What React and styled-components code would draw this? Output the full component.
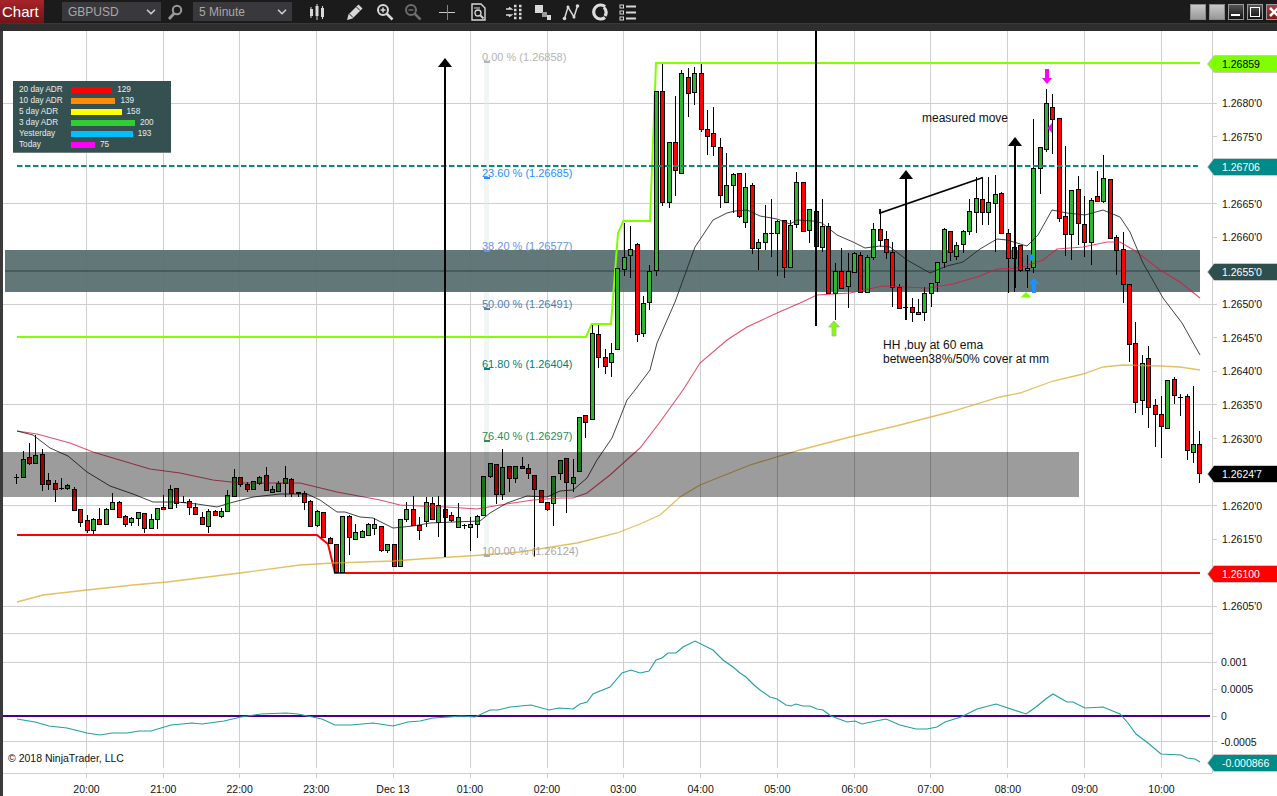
import React from 'react';
import styled, { createGlobalStyle } from 'styled-components';
import { ChevronDown } from 'lucide-react';

// [high, low, bodyTop, bodyBottom, colour] in page pixels, one candle every 6.4px
const CANDLES = [
  [474,484,477,477,'d'],[451,478,459,477,'g'],[443,465,457,463,'r'],[435,463,455,463,'g'],[449,491,454,484,'r'],[473,490,480,484,'r'],
  [480,502,483,489,'r'],[478,490,488,488,'d'],[484,490,485,488,'g'],[487,511,489,510,'r'],[509,527,509,522,'r'],[515,533,520,530,'r'],
  [518,534,519,530,'g'],[508,525,519,524,'r'],[508,525,509,524,'g'],[493,509,502,509,'g'],[501,518,502,517,'r'],[515,527,516,524,'r'],
  [517,526,518,522,'g'],[512,526,512,518,'g'],[513,533,513,528,'r'],[514,529,519,528,'g'],[508,529,508,519,'g'],[495,509,507,509,'r'],
  [485,508,489,508,'g'],[488,508,488,503,'r'],[496,503,502,502,'d'],[499,515,501,507,'r'],[503,515,507,514,'r'],[512,525,517,524,'r'],
  [509,533,511,526,'g'],[510,515,511,515,'r'],[508,518,511,516,'g'],[490,512,495,511,'g'],[469,497,477,496,'g'],[477,487,477,484,'r'],
  [482,492,484,489,'r'],[481,490,481,489,'g'],[476,485,477,483,'g'],[467,491,475,490,'r'],[486,492,489,492,'g'],[481,492,483,491,'g'],
  [466,497,478,483,'g'],[478,497,479,493,'r'],[492,497,492,493,'r'],[491,510,493,502,'r'],[500,526,501,526,'r'],[510,527,511,525,'g'],
  [512,537,512,537,'r'],[537,544,538,543,'r'],[544,572,544,572,'r'],[516,572,516,572,'g'],[515,555,516,537,'r'],[524,539,532,539,'g'],
  [530,537,531,537,'g'],[523,535,524,535,'g'],[518,535,524,528,'g'],[526,552,526,550,'r'],[544,553,544,550,'g'],[544,567,544,566,'r'],
  [519,566,519,566,'g'],[502,522,509,519,'g'],[496,526,509,525,'r'],[517,540,525,530,'r'],[497,527,502,521,'g'],[497,520,503,519,'r'],
  [496,537,505,522,'g'],[503,527,509,517,'r'],[512,522,515,520,'r'],[503,527,517,527,'g'],[524,529,525,525,'d'],[517,551,524,527,'g'],
  [515,538,516,524,'g'],[476,516,476,515,'g'],[463,478,463,476,'g'],[464,504,464,494,'r'],[449,500,467,494,'g'],[466,492,466,478,'r'],
  [466,483,466,478,'g'],[457,468,466,468,'r'],[464,479,468,473,'r'],[475,557,475,489,'r'],[490,503,490,502,'r'],[502,511,502,509,'r'],
  [476,526,476,503,'g'],[460,480,460,473,'g'],[458,513,458,482,'r'],[459,492,477,483,'g'],[417,471,417,471,'g'],[415,438,415,422,'r'],
  [325,419,333,419,'g'],[325,368,334,357,'r'],[349,374,357,366,'r'],[343,377,353,362,'g'],[268,349,268,349,'g'],[223,276,257,269,'g'],
  [226,278,249,255,'g'],[243,342,244,334,'r'],[296,337,303,333,'g'],[265,310,271,302,'g'],[91,276,91,270,'g'],[64,206,91,202,'r'],
  [142,208,142,202,'g'],[96,196,142,170,'r'],[70,173,73,173,'g'],[68,117,77,93,'r'],[67,105,73,92,'g'],[64,132,73,129,'r'],
  [110,155,129,136,'r'],[107,156,133,146,'r'],[138,208,147,195,'r'],[153,202,185,202,'g'],[173,213,174,185,'g'],[173,218,173,216,'r'],
  [173,228,187,222,'g'],[183,254,185,248,'r'],[239,270,242,248,'g'],[205,250,233,242,'g'],[199,257,233,233,'d'],[220,276,221,233,'g'],
  [220,278,220,267,'r'],[220,267,225,267,'g'],[172,228,182,224,'g'],[182,232,182,231,'r'],[209,243,209,230,'g'],[211,247,211,246,'r'],
  [199,252,226,247,'g'],[223,293,226,293,'r'],[263,320,271,293,'g'],[248,288,271,288,'r'],[253,308,271,286,'g'],[252,272,253,272,'g'],
  [252,293,255,292,'r'],[255,292,257,292,'g'],[223,260,229,257,'g'],[210,247,229,240,'r'],[231,259,239,252,'r'],[242,307,252,287,'r'],
  [284,308,287,308,'r'],[293,320,307,307,'d'],[298,322,307,312,'r'],[299,314,312,314,'g'],[287,321,293,312,'g'],[283,307,283,293,'g'],
  [262,292,262,282,'g'],[228,268,229,262,'g'],[231,261,231,252,'r'],[242,260,245,256,'g'],[230,253,231,244,'g'],[199,235,211,231,'g'],
  [177,233,198,212,'g'],[177,225,199,212,'r'],[177,225,202,212,'g'],[175,252,194,203,'g'],[192,234,193,233,'r'],[229,293,233,258,'r'],
  [245,292,247,258,'g'],[245,272,245,270,'r'],[255,288,268,270,'g'],[119,273,168,267,'g'],[147,194,147,168,'g'],[89,152,103,149,'g'],
  [94,154,107,119,'r'],[118,222,118,218,'r'],[146,256,216,234,'r'],[190,260,190,234,'g'],[176,245,189,223,'r'],[196,257,224,242,'r'],
  [198,265,200,242,'g'],[171,202,196,201,'r'],[155,203,178,201,'g'],[179,238,179,238,'r'],[235,275,237,250,'r'],[232,303,249,284,'r'],
  [284,362,284,344,'r'],[322,413,343,402,'r'],[355,415,363,400,'g'],[346,428,358,407,'r'],[399,447,405,414,'r'],[396,458,414,426,'r'],
  [380,428,380,428,'g'],[377,404,379,395,'r'],[394,416,397,397,'d'],[394,460,396,450,'r'],[386,463,444,452,'g'],[431,483,444,473,'r'],
];

const BLACK_EMA = '17,431 33,435 50,448 68,456 87,472 110,486 133,494 153,502 177,502 197,504 217,507 230,503 253,497 280,494 307,494 320,500 337,512 345,512 360,517 373,518 393,528 413,526 430,523 453,522 480,521 490,513 507,503 527,496 547,497 560,491 573,490 587,478 597,460 612,438 627,400 635,390 650,370 657,343 675,302 695,247 713,220 727,213 735,211 747,210 760,216 777,219 790,224 797,220 813,221 822,223 837,235 853,242 865,248 880,246 890,247 907,260 930,273 947,266 963,262 980,249 997,239 1007,240 1027,246 1038,235 1052,210 1067,213 1085,215 1103,210 1120,217 1130,232 1143,263 1163,298 1182,323 1200,355';
const RED_EMA = '17,431 37,434 70,443 93,452 123,461 150,469 180,473 213,480 240,483 300,483 337,492 380,500 400,505 420,506 447,507 477,509 500,505 533,500 560,498 573,498 587,493 610,475 640,448 660,422 683,390 700,363 727,340 747,327 777,313 800,303 817,295 850,293 883,286 927,288 953,284 980,276 997,269 1020,268 1043,260 1057,249 1083,247 1107,242 1120,242 1137,252 1160,270 1180,282 1200,298';
const GOLD_EMA = '17,602 43,595 87,590 133,585 167,582 240,573 300,565 333,563 393,561 420,559 483,555 520,552 577,543 617,533 640,524 660,515 680,497 700,485 750,465 800,450 850,437 900,425 950,412 1000,397 1020,393 1053,381 1083,374 1103,367 1123,365 1160,366 1180,367 1200,370';
const OSCILLATOR = '17,719 35,722 49,726 67,728 87,733 100,735 112,733 127,733 139,731 151,731 171,725 192,723 202,724 224,721 241,717 261,714 286,713 298,714 322,719 335,725 351,725 373,723 393,726 408,722 420,721 433,718 449,717 461,716 475,717 490,710 498,710 510,707 531,705 549,710 559,708 573,709 580,704 587,702 593,694 600,691 610,687 622,673 631,670 640,673 649,671 656,660 662,658 668,653 676,653 683,647 695,641 713,650 723,660 733,667 740,673 746,677 754,685 760,690 770,697 777,699 786,705 791,706 796,704 803,706 810,706 817,709 823,710 831,716 847,722 855,721 862,724 876,721 886,719 900,725 916,729 927,729 937,727 945,722 961,717 977,709 996,704 1026,714 1036,707 1047,698 1053,694 1067,702 1073,702 1085,708 1103,707 1120,714 1128,723 1136,734 1148,743 1161,754 1181,755 1187,758 1195,759 1200,762';

const HOURS = [
  ['20:00', 86.5], ['21:00', 163.3], ['22:00', 239.6], ['23:00', 316.3], ['Dec 13', 393], ['01:00', 470], ['02:00', 547], ['03:00', 623.3],
  ['04:00', 700.6], ['05:00', 777.4], ['06:00', 854.6], ['07:00', 930.7], ['08:00', 1007.9], ['09:00', 1084.7], ['10:00', 1161.5],
];

const priceY = (p) => 103 + ((1.268 - p) / 0.0005) * 33.55;
const PRICE_TICKS = ['1.2685', '1.2680', '1.2675', '1.2670', '1.2665', '1.2660', '1.2655', '1.2650', '1.2645', '1.2640', '1.2635', '1.2630', '1.2625', '1.2620', '1.2615', '1.2610', '1.2605'];
// these sit fully behind a price tag in the picture
const HIDDEN_LABELS = ['1.2670', '1.2655', '1.2625', '1.2610'];
const PRICE_GRID = [1.268, 1.2665, 1.265, 1.2635, 1.262, 1.2605];

const FIBS = [
  ['0.00 % (1.26858)', 62, '#b4b4b4'],
  ['23.60 % (1.26685)', 178, '#1e90ff'],
  ['38.20 % (1.26577)', 251, '#6495ed'],
  ['50.00 % (1.26491)', 309, '#4682b4'],
  ['61.80 % (1.26404)', 369, '#008080'],
  ['76.40 % (1.26297)', 441, '#2e8b57'],
  ['100.00 % (1.26124)', 556, '#a9a9a9'],
];

const ADR = [
  ['20 day ADR', 129, '#ff0000'],
  ['10 day ADR', 139, '#ff8c00'],
  ['5 day ADR', 158, '#ffff00'],
  ['3 day ADR', 200, '#32cd32'],
  ['Yesterday', 193, '#00bfff'],
  ['Today', 75, '#ff00ff'],
];

const TAGS = [
  ['1.26859', 63, '#7fff00', '#000'],
  ['1.26706', 166, '#008b8b', '#fff'],
  ["1.2655'0", 271, '#2f4f4f', '#fff'],
  ["1.2624'7", 473, '#000', '#fff'],
  ['1.26100', 573, '#f00', '#fff'],
  ['-0.000866', 762, '#008b8b', '#fff'],
];

const GlobalStyle = createGlobalStyle`
  html, body {
    margin: 0;
    height: 100%;
    overflow: hidden;
    background: #fff;
    font-family: "Liberation Sans", Arial, sans-serif;
  }
`;

const Window = styled.div`
  display: flex;
  flex-direction: column;
  height: 796px;
  overflow: hidden;
`;

const TitleBar = styled.div`
  display: flex;
  align-items: center;
  height: 23px;
  flex: none;
  background: #1b1b1b;
`;

const ChartTab = styled.div`
  width: 44px;
  height: 100%;
  margin-right: 18px;
  padding-left: 2px;
  box-sizing: border-box;
  background: linear-gradient(#a8232a, #731418);
  color: #fff;
  font-size: 15px;
  line-height: 23px;
`;

const Select = styled.div`
  display: flex;
  align-items: center;
  justify-content: space-between;
  width: 99px;
  height: 19px;
  margin-left: ${(p) => p.$ml || 0}px;
  padding: 0 3px 0 6px;
  box-sizing: border-box;
  background: #39393d;
  color: #a8a8a8;
  font-size: 12px;
`;

const IconSlot = styled.div`
  display: flex;
  align-items: center;
  justify-content: center;
  flex: none;
  width: 20px;
  height: 20px;
  margin-left: ${(p) => p.$ml}px;
`;

const WindowButtons = styled.div`
  display: flex;
  gap: 3px;
  margin-left: auto;
  margin-right: -5px;
`;

const WindowButton = styled.div`
  display: flex;
  align-items: center;
  justify-content: center;
  width: 16px;
  height: 16px;
  flex: none;
  box-sizing: border-box;
  background: ${(p) =>
    p.$kind === 'blank' ? 'linear-gradient(#c8c8c8, #989898)'
    : p.$kind === 'close' ? 'linear-gradient(#b04040, #7d1a1a)'
    : 'linear-gradient(#555, #111)'};
  border: 1px solid ${(p) => (p.$kind === 'blank' ? '#8a8a8a' : '#9a9a9a')};
`;

const Strip = styled.div`
  height: 8px;
  flex: none;
  background: #2e2e2e;
  border-top: 1px solid #383838;
  box-sizing: border-box;
`;

const ChartArea = styled.div`
  position: relative;
  flex: 1;
  border-left: 3px solid #3a3a3a;
  background: #fff;
`;

const ChartSvg = styled.svg`
  display: block;
  width: 1274px;
  height: 765px;
  font-family: "Liberation Sans", Arial, sans-serif;
`;

const Legend = styled.div`
  position: absolute;
  left: 10px;
  top: 50px;
  width: 158px;
  height: 72px;
  padding: 3px 0 0 6px;
  box-sizing: border-box;
  background: #355050;
  border-bottom: 1px solid #6c8080;
`;

const LegendRow = styled.div`
  display: flex;
  align-items: center;
  height: 11px;
  color: #e6ecec;
  font-size: 8.2px;
`;

const LegendLabel = styled.span`
  width: 52px;
  flex: none;
`;

const LegendBar = styled.span`
  height: 6px;
  flex: none;
  margin-right: 5px;
  background: ${(p) => p.$color};
`;

const PriceTag = styled.div`
  position: absolute;
  left: 1204px;
  top: ${(p) => p.$y - 39}px;
  width: 70px;
  height: 18px;
  background: #c8c8c8;
  clip-path: polygon(7px 0, 100% 0, 100% 100%, 7px 100%, 0 50%);
`;

const PriceTagBody = styled.div`
  height: 16px;
  margin: 1px 0 1px 1px;
  padding-left: 14px;
  background: ${(p) => p.$bg};
  color: ${(p) => p.$fg};
  font-size: 10.5px;
  line-height: 16px;
  clip-path: polygon(6px 0, 100% 0, 100% 100%, 6px 100%, 0 50%);
`;

const ICON_STROKE = '#d8d8d8';

function BarsIcon() {
  return (
    <svg width="18" height="18" viewBox="0 0 18 18">
      <path d="M3 4v11M9 1v16M14.500 3v13" stroke={ICON_STROKE} strokeWidth="1" />
      <rect x="2" y="6" width="3" height="7" fill={ICON_STROKE} />
      <rect x="7.500" y="3" width="3" height="10" fill={ICON_STROKE} />
      <rect x="13" y="5" width="3" height="9" fill={ICON_STROKE} />
    </svg>
  );
}

function PencilIcon() {
  return (
    <svg width="18" height="18" viewBox="0 0 18 18">
      <path d="M1 17l1.500-5.500L12.500 1.500l4 4-10 10z" fill={ICON_STROKE} />
      <path d="M3.500 11l3.500 3.500M10.500 4l3.500 3.500" stroke="#1b1b1b" strokeWidth="1" />
    </svg>
  );
}

function MagnifierIcon({ color = ICON_STROKE, mark = 'plus' }) {
  return (
    <svg width="18" height="18" viewBox="0 0 18 18">
      <circle cx="7" cy="7" r="5" fill="none" stroke={color} strokeWidth="2" />
      <path d="M10.500 10.500l6 6" stroke={color} strokeWidth="2.500" />
      <path d={mark === 'plus' ? 'M4.500 7h5M7 4.500v5' : 'M4.500 7h5'} stroke={color} strokeWidth="1.500" />
    </svg>
  );
}

function SymbolSearchIcon() {
  return (
    <svg width="16" height="16" viewBox="0 0 16 16">
      <circle cx="10" cy="6" r="4.200" fill="none" stroke="#9a9a9a" strokeWidth="2" />
      <path d="M7 9.500L2 15" stroke="#9a9a9a" strokeWidth="2.800" />
    </svg>
  );
}

function CrossIcon() {
  return (
    <svg width="18" height="18" viewBox="0 0 18 18">
      <path d="M1 9.500h16" stroke="#c8c8c8" strokeWidth="1" />
      <path d="M9.500 2v15" stroke="#b87a3a" strokeWidth="1" />
    </svg>
  );
}

function DocSearchIcon() {
  return (
    <svg width="18" height="18" viewBox="0 0 18 18">
      <path d="M2 1h9l4 4v12H2z" fill="none" stroke={ICON_STROKE} strokeWidth="1.400" />
      <path d="M4 5h6" stroke={ICON_STROKE} strokeWidth="1" />
      <circle cx="8" cy="10" r="3" fill="none" stroke={ICON_STROKE} strokeWidth="1.300" />
      <path d="M10.500 12.500l3 3" stroke={ICON_STROKE} strokeWidth="1.800" />
    </svg>
  );
}

function ColumnsIcon() {
  return (
    <svg width="18" height="18" viewBox="0 0 18 18">
      <path d="M1 6h5l-2 -1.500M1 12h5l-2 1.500" fill="none" stroke={ICON_STROKE} strokeWidth="1.600" />
      <path d="M9 3h2.500M9 7h2.500M9 11h2.500M9 15h2.500M14 3h2.500M14 7h2.500M14 11h2.500M14 15h2.500" stroke={ICON_STROKE} strokeWidth="2.500" />
    </svg>
  );
}

function SquaresIcon() {
  return (
    <svg width="18" height="18" viewBox="0 0 18 18">
      <rect x="1" y="2" width="8" height="8" fill="#d8d8d8" />
      <rect x="8" y="9" width="5" height="5" fill="#9a9a9a" />
      <rect x="13" y="12" width="4" height="5" fill="#d8d8d8" />
    </svg>
  );
}

function NodesIcon() {
  return (
    <svg width="18" height="18" viewBox="0 0 18 18">
      <path d="M2.500 15.500L6 4l6 10L15.500 3" fill="none" stroke={ICON_STROKE} strokeWidth="1.500" />
      <circle cx="2.500" cy="15.500" r="1.800" fill={ICON_STROKE} />
      <circle cx="6" cy="4" r="1.500" fill={ICON_STROKE} />
      <circle cx="12" cy="14" r="1.500" fill={ICON_STROKE} />
      <circle cx="15.500" cy="3" r="1.800" fill={ICON_STROKE} />
    </svg>
  );
}

function RingIcon() {
  return (
    <svg width="18" height="18" viewBox="0 0 18 18">
      <path d="M14 3.500A7 7 0 1 0 14 14.500M13 4.500A7 7 0 0 1 14 13" fill="none" stroke="#dcdcdc" strokeWidth="3.200" />
    </svg>
  );
}

function ListIcon() {
  return (
    <svg width="18" height="18" viewBox="0 0 18 18">
      <rect x="1" y="2" width="3.500" height="3" fill="none" stroke={ICON_STROKE} />
      <rect x="1" y="8" width="3.500" height="3" fill="none" stroke={ICON_STROKE} />
      <rect x="1" y="14" width="3.500" height="3" fill="none" stroke={ICON_STROKE} />
      <path d="M7 3.500h10M7 9.500h10M7 15.500h10" stroke={ICON_STROKE} strokeWidth="1.800" />
    </svg>
  );
}

const TOOL_ICONS = [
  [15, <BarsIcon />],
  [18, <PencilIcon />],
  [10, <MagnifierIcon />],
  [8, <MagnifierIcon color="#6e6e6e" mark="minus" />],
  [14, <CrossIcon />],
  [12, <DocSearchIcon />],
  [15, <ColumnsIcon />],
  [9, <SquaresIcon />],
  [8, <NodesIcon />],
  [9, <RingIcon />],
  [8, <ListIcon />],
];

function Candle({ c, x }) {
  const [hi, lo, top, bottom, kind] = c;
  const cx = Math.round(x);
  const fill = kind === 'g' ? '#2fb52f' : '#ff0000';
  return (
    <g shapeRendering="crispEdges">
      <line x1={cx + 0.5} x2={cx + 0.5} y1={hi} y2={lo} stroke="#000" />
      {kind === 'd' ? (
        <line x1={cx - 2} x2={cx + 3} y1={top + 0.5} y2={top + 0.5} stroke="#000" strokeWidth="1.500" />
      ) : (
        <rect x={cx - 1.5} y={top + 0.5} width="4" height={Math.max(bottom - top, 1)} fill={fill} stroke="#000" />
      )}
    </g>
  );
}

function UpArrow({ x, top, bottom, color, edge = 'none' }) {
  return (
    <path
      d={`M${x} ${top}l5.500 6h-3.500V${bottom}h-4V${top + 6}h-3.500z`}
      fill={color}
      stroke={edge}
      strokeWidth="0.800"
    />
  );
}

function BlackArrow({ x, top, bottom }) {
  return (
    <g>
      <line x1={x} x2={x} y1={top + 6} y2={bottom} stroke="#000" strokeWidth="2" />
      <path d={`M${x} ${top}l7 9h-14z`} fill="#000" />
    </g>
  );
}

function Chart() {
  return (
    <ChartSvg viewBox="3 31 1274 765">
      {/* grid */}
      <g stroke="#cfcfcf" strokeWidth="1" shapeRendering="crispEdges">
        {HOURS.map(([label, x]) => (
          <g key={label}>
            <line x1={x} x2={x} y1="31" y2="768" />
            <line x1={x} x2={x} y1="773" y2="778" />
          </g>
        ))}
        {PRICE_GRID.map((p) => (
          <line key={p} x1="3" x2="1212" y1={priceY(p)} y2={priceY(p)} />
        ))}
        <line x1="3" x2="1212" y1="633.500" y2="633.500" />
        <line x1="3" x2="1212" y1="662" y2="662" />
        <line x1="3" x2="1212" y1="741" y2="741" />
        <line x1="3" x2="1212" y1="773" y2="773" />
        <line x1="1212" x2="1212" y1="31" y2="773" />
        {PRICE_TICKS.map((p) => (
          <line key={p} x1="1212" x2="1217" y1={priceY(+p)} y2={priceY(+p)} />
        ))}
        {[662, 689, 716, 741].map((y) => (
          <line key={y} x1="1212" x2="1217" y1={y} y2={y} />
        ))}
      </g>

      <rect x="484" y="58" width="5" height="497" fill="#dfeae8" fillOpacity="0.45" />

      {/* upper zone sits under the candles */}
      <rect x="5" y="250" width="1195" height="42" fill="#5c7272" fillOpacity="0.96" />
      <line x1="5" x2="1200" y1="271" y2="271" stroke="#3b5353" strokeWidth="1.500" />

      <polyline points="17,337 586,337 591.700,324 611,324 618,233 623.300,221 650,221 656,63 1200,63" fill="none" stroke="#7fff00" strokeWidth="2" />
      <polyline points="17,535 317,535 328,544 335,573 1200,573" fill="none" stroke="#ff0000" strokeWidth="2" />

      {CANDLES.map((c, i) => (
        <Candle key={i} c={c} x={16.3 + i * 6.395} />
      ))}

      <polyline points={RED_EMA} fill="none" stroke="#dc143c" strokeOpacity="0.75" strokeWidth="1.100" />
      <polyline points={BLACK_EMA} fill="none" stroke="#222" strokeOpacity="0.85" strokeWidth="1" />
      <polyline points={GOLD_EMA} fill="none" stroke="#daa520" strokeOpacity="0.7" strokeWidth="1.300" />
      <line x1="17" x2="1198" y1="166" y2="166" stroke="#008b8b" strokeWidth="2" strokeDasharray="5.500 2.500" />

      {/* lower zone darkens what is under it */}
      <rect x="3" y="452" width="1076" height="45" fill="#000" fillOpacity="0.39" />

      {FIBS.map(([label, y, color]) => (
        <g key={label}>
          <line x1="484" x2="490" y1={y} y2={y} stroke={color} strokeWidth="2" />
          <text x="482" y={y - 1} fontSize="11" fill={color}>{label}</text>
        </g>
      ))}

      {/* drawing objects */}
      <BlackArrow x={445} top={58} bottom={557} />
      <line x1="816" x2="816" y1="31" y2="326" stroke="#000" strokeWidth="2" />
      <BlackArrow x={906} top={170} bottom={320} />
      <BlackArrow x={1015} top={137} bottom={288} />
      <polyline points="880,209 880,213 983,177.500" fill="none" stroke="#000" strokeWidth="1.800" />

      <UpArrow x={834} top={321} bottom={336} color="#7fff00" edge="#b0b0b0" />
      <UpArrow x={1034} top={278} bottom={293} color="#1e90ff" />
      <path d="M1026 292l5.500 5.500h-11z" fill="#7fff00" />
      <path d="M1030 253l5 4.500-5 4.500z" fill="#1e90ff" />
      <path d="M1047 84l-5-6h3V69h4v9h3z" fill="#ff00ff" />
      <path d="M1052 123v10l-4.500-5z" fill="#ff00ff" />

      <text x="922" y="122" fontSize="12" fill="#111">measured move</text>
      <text x="883" y="349" fontSize="12" fill="#111">HH ,buy at 60 ema</text>
      <text x="883" y="363" fontSize="12" fill="#111">between38%/50% cover at mm</text>

      {/* oscillator */}
      <line x1="3" x2="1210" y1="716" y2="716" stroke="#4b0082" strokeWidth="2" />
      <polyline points={OSCILLATOR} fill="none" stroke="#20a0a0" strokeWidth="1.100" />
      <text x="8" y="762" fontSize="10.500" fill="#111">© 2018 NinjaTrader, LLC</text>

      {/* axes */}
      <g fontSize="10.500" fill="#111">
        {HOURS.map(([label, x]) => (
          <text key={label} x={x} y="793" textAnchor="middle">{label}</text>
        ))}
        {PRICE_TICKS.filter((p) => !HIDDEN_LABELS.includes(p)).map((p) => (
          <text key={p} x="1222" y={priceY(+p) + 4}>{p}'0</text>
        ))}
        <text x="1221" y="666">0.001</text>
        <text x="1221" y="693">0.0005</text>
        <text x="1221" y="720">0</text>
        <text x="1221" y="746">-0.0005</text>
      </g>
    </ChartSvg>
  );
}

export default function App() {
  return (
    <Window>
      <GlobalStyle />
      <TitleBar>
        <ChartTab>Chart</ChartTab>
        <Select>GBPUSD<ChevronDown size={14} strokeWidth={3} color="#c8c8c8" /></Select>
        <IconSlot $ml={4}><SymbolSearchIcon /></IconSlot>
        <Select $ml={8}>5 Minute<ChevronDown size={14} strokeWidth={3} color="#c8c8c8" /></Select>
        {TOOL_ICONS.map(([ml, icon], i) => (
          <IconSlot key={i} $ml={ml}>{icon}</IconSlot>
        ))}
        <WindowButtons>
          <WindowButton $kind="blank" />
          <WindowButton $kind="blank" />
          <WindowButton $kind="dark">
            <svg width="12" height="12" viewBox="0 0 12 12"><rect x="1" y="8" width="9" height="2" fill="#fff" /></svg>
          </WindowButton>
          <WindowButton $kind="dark">
            <svg width="12" height="12" viewBox="0 0 12 12"><rect x="1.500" y="1.500" width="9" height="9" fill="none" stroke="#fff" /></svg>
          </WindowButton>
          <WindowButton $kind="close">
            <svg width="12" height="12" viewBox="0 0 12 12"><path d="M2 2l8 8M10 2l-8 8" stroke="#fff" strokeWidth="2.500" /></svg>
          </WindowButton>
        </WindowButtons>
      </TitleBar>
      <Strip />
      <ChartArea>
        <Chart />
        <Legend>
          {ADR.map(([label, value, color]) => (
            <LegendRow key={label}>
              <LegendLabel>{label}</LegendLabel>
              <LegendBar $color={color} style={{ width: value * 0.32 }} />
              {value}
            </LegendRow>
          ))}
        </Legend>
        {TAGS.map(([label, y, bg, fg]) => (
          <PriceTag key={label} $y={y}>
            <PriceTagBody $bg={bg} $fg={fg}>{label}</PriceTagBody>
          </PriceTag>
        ))}
      </ChartArea>
    </Window>
  );
}
